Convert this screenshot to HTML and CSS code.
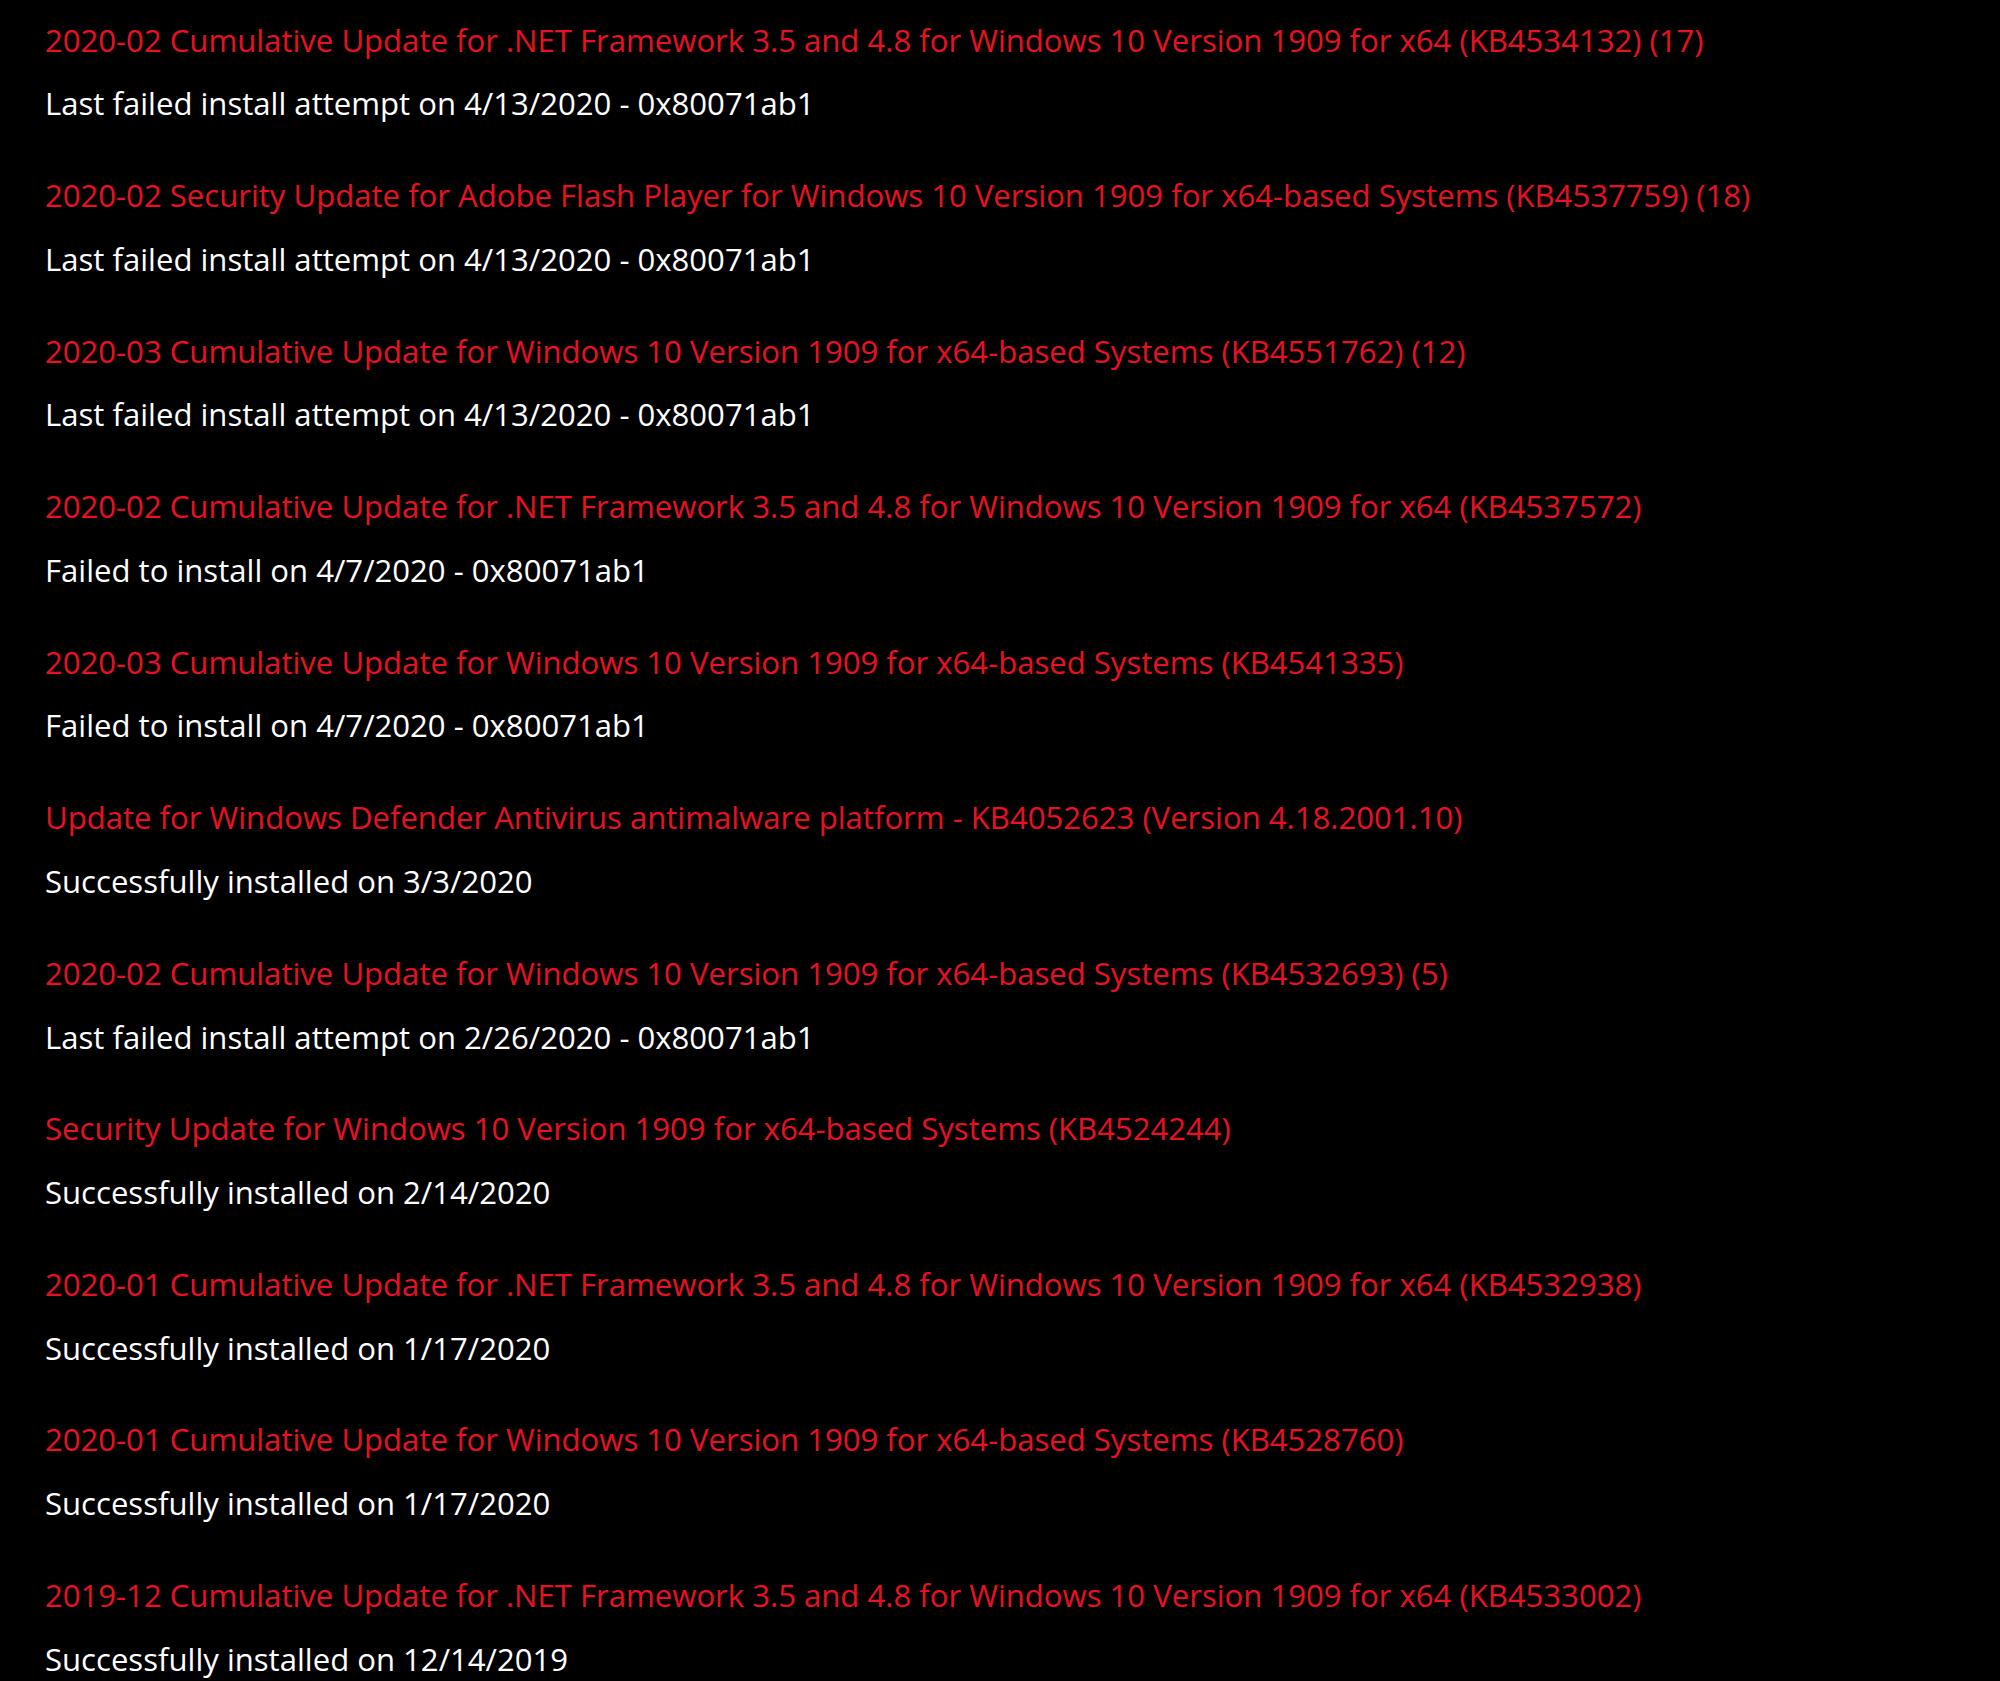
FILE: index.html
```html
<!DOCTYPE html>
<html lang="en">
<head>
<meta charset="utf-8">
<title>Update history</title>
<link rel="stylesheet" href="styles.css">
</head>
<body>
<main class="history">
  <div class="item">
    <div class="title">2020-02 Cumulative Update for .NET Framework 3.5 and 4.8 for Windows 10 Version 1909 for x64 (KB4534132) (17)</div>
    <div class="status">Last failed install attempt on 4/13/2020 - 0x80071ab1</div>
  </div>
  <div class="item">
    <div class="title">2020-02 Security Update for Adobe Flash Player for Windows 10 Version 1909 for x64-based Systems (KB4537759) (18)</div>
    <div class="status">Last failed install attempt on 4/13/2020 - 0x80071ab1</div>
  </div>
  <div class="item">
    <div class="title">2020-03 Cumulative Update for Windows 10 Version 1909 for x64-based Systems (KB4551762) (12)</div>
    <div class="status">Last failed install attempt on 4/13/2020 - 0x80071ab1</div>
  </div>
  <div class="item">
    <div class="title">2020-02 Cumulative Update for .NET Framework 3.5 and 4.8 for Windows 10 Version 1909 for x64 (KB4537572)</div>
    <div class="status">Failed to install on 4/7/2020 - 0x80071ab1</div>
  </div>
  <div class="item">
    <div class="title">2020-03 Cumulative Update for Windows 10 Version 1909 for x64-based Systems (KB4541335)</div>
    <div class="status">Failed to install on 4/7/2020 - 0x80071ab1</div>
  </div>
  <div class="item">
    <div class="title">Update for Windows Defender Antivirus antimalware platform - KB4052623 (Version 4.18.2001.10)</div>
    <div class="status">Successfully installed on 3/3/2020</div>
  </div>
  <div class="item">
    <div class="title">2020-02 Cumulative Update for Windows 10 Version 1909 for x64-based Systems (KB4532693) (5)</div>
    <div class="status">Last failed install attempt on 2/26/2020 - 0x80071ab1</div>
  </div>
  <div class="item">
    <div class="title">Security Update for Windows 10 Version 1909 for x64-based Systems (KB4524244)</div>
    <div class="status">Successfully installed on 2/14/2020</div>
  </div>
  <div class="item">
    <div class="title">2020-01 Cumulative Update for .NET Framework 3.5 and 4.8 for Windows 10 Version 1909 for x64 (KB4532938)</div>
    <div class="status">Successfully installed on 1/17/2020</div>
  </div>
  <div class="item">
    <div class="title">2020-01 Cumulative Update for Windows 10 Version 1909 for x64-based Systems (KB4528760)</div>
    <div class="status">Successfully installed on 1/17/2020</div>
  </div>
  <div class="item">
    <div class="title">2019-12 Cumulative Update for .NET Framework 3.5 and 4.8 for Windows 10 Version 1909 for x64 (KB4533002)</div>
    <div class="status">Successfully installed on 12/14/2019</div>
  </div>
</main>
</body>
</html>
```
FILE: styles.css
```css
html, body {
  margin: 0;
  padding: 0;
  background: #000;
}
body {
  font-family: "Open Sans", "Noto Sans", sans-serif;
  font-size: 31.1px;
  overflow: hidden;
}
.history {
  padding: 15.5px 0 0 45px;
  display: flex;
  flex-direction: column;
  gap: 43.75px;
}
.item {
  display: flex;
  flex-direction: column;
  gap: 15.8px;
}
.title {
  color: #e81123;
  line-height: 48px;
  white-space: nowrap;
}
.status {
  color: #fff;
  line-height: 48px;
  white-space: nowrap;
}
```
